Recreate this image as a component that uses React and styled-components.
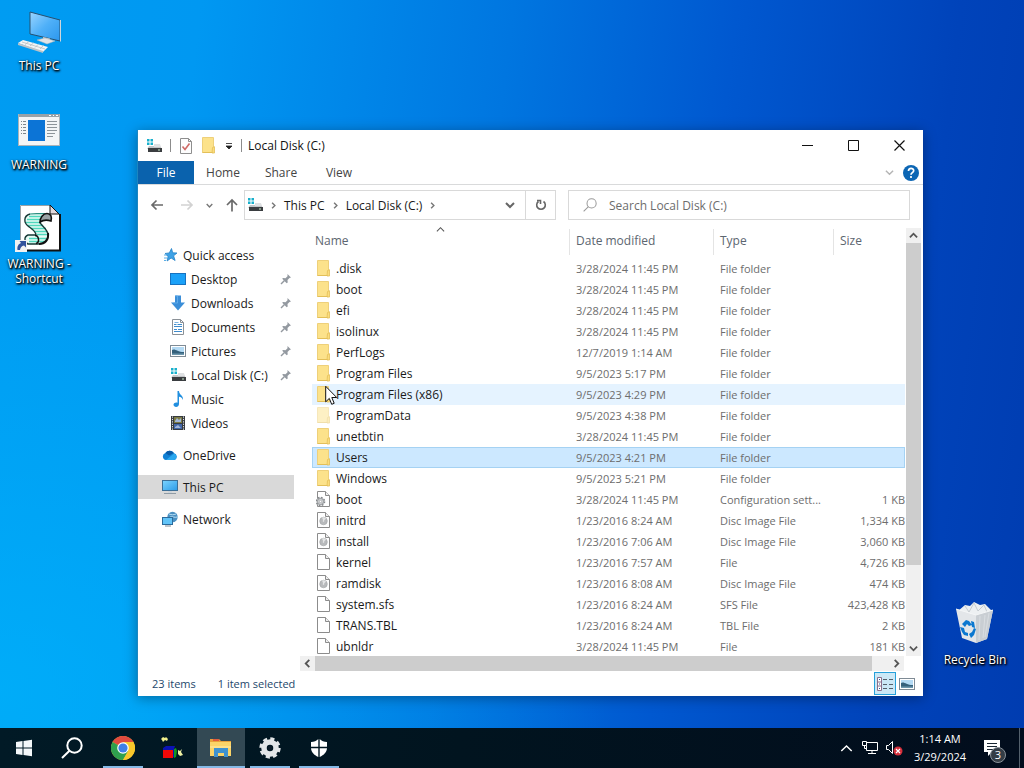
import React, { useState } from 'react'
import styled, { createGlobalStyle, css } from 'styled-components'

const GlobalStyle = createGlobalStyle`
  * {
    box-sizing: border-box;
  }

  body {
    margin: 0;
    font-family: 'Open Sans', 'Noto Sans', sans-serif;
    font-size: 12px;
    line-height: 15px;
    color: #1a1a1a;
    overflow: hidden;
  }

  button, input {
    font: inherit;
    color: inherit;
    background: none;
    border: 0;
    padding: 0;
    margin: 0;
  }

  a {
    color: inherit;
    text-decoration: none;
  }

  svg {
    display: block;
    flex: none;
  }
`

const Screen = styled.div`
  display: flex;
  flex-direction: column;
  height: 100vh;
  background:
    radial-gradient(ellipse 60% 60% at 0% 90%, rgba(0, 190, 255, .5), rgba(0, 190, 255, 0)),
    linear-gradient(97deg, #009cf2 0%, #0098f2 18%, #0076e0 46%, #0058d0 66%, #0043ba 86%, #003cb0 100%);
`

const Desktop = styled.main`
  position: relative;
  flex: 1;
  min-height: 0;
`

const Shortcut = styled.a`
  position: absolute;
  display: flex;
  flex-direction: column;
  align-items: center;
  gap: 4px;
  width: 76px;
  color: #fff;
  text-align: center;
  text-shadow: 1px 1px 2px #000, 1px 1px 2px #000, 0 1px 3px rgba(0, 0, 0, .8);
`

const PcShortcut = styled(Shortcut)`
  left: 1px;
  top: 10px;
`

const WarningShortcut = styled(Shortcut)`
  left: 1px;
  top: 109px;
`

const ScriptShortcut = styled(Shortcut)`
  left: 1px;
  top: 204px;
`

const BinShortcut = styled(Shortcut)`
  right: 11px;
  bottom: 61px;
`

const Window = styled.section`
  position: absolute;
  left: 137px;
  right: 101px;
  top: 130px;
  bottom: 32px;
  display: flex;
  flex-direction: column;
  background: #fff;
  border-left: 1px solid #1c86c0;
  box-shadow: 0 2px 12px rgba(0, 0, 0, .35);
`

const TitleBar = styled.header`
  display: flex;
  align-items: center;
  height: 31px;
  padding: 0 1px 0 8px;
`

const Rule = styled.span`
  width: 1px;
  height: 13px;
  background: #8c8c8c;
`

const QuickTools = styled.div`
  display: flex;
  align-items: center;
  gap: 8px;
  margin-right: 6px;
`

const WindowTitle = styled.h1`
  flex: 1;
  margin: 0;
  font-size: 12px;
  font-weight: 400;
  color: #111;
`

const CaptionButton = styled.button`
  display: flex;
  align-items: center;
  justify-content: center;
  width: 46px;
  height: 30px;
`

const Ribbon = styled.div`
  display: flex;
  height: 24px;
  border-bottom: 1px solid #d9dadb;
`

const RibbonTab = styled.button`
  width: ${p => p.$file ? 56 : 58}px;
  color: ${p => p.$file ? '#fff' : '#444'};
  background: ${p => p.$file ? '#0a62ad' : 'none'};
`

const RibbonEnd = styled.div`
  display: flex;
  align-items: center;
  gap: 9px;
  margin-left: auto;
  padding-right: 4px;
`

const AddressRow = styled.div`
  display: flex;
  align-items: center;
  height: 40px;
  padding: 0 13px 0 12px;
`

const NavButtons = styled.div`
  display: flex;
  align-items: center;
  gap: 12px;
  margin-right: 5px;

  button:first-child {
    margin-right: 4px;
  }
`

const AddressBox = styled.div`
  display: flex;
  flex: 1;
  align-items: center;
  height: 30px;
  border: 1px solid #d9d9d9;
`

const Crumbs = styled.nav`
  display: flex;
  flex: 1;
  align-items: center;
  gap: 7px;
  padding-left: 2px;
`

const BoxButton = styled.button`
  display: flex;
  align-items: center;
  justify-content: center;
  width: 30px;
  height: 28px;
  border-left: ${p => p.$divided ? '1px solid #d9d9d9' : '0'};
`

const SearchBox = styled.label`
  display: flex;
  align-items: center;
  gap: 12px;
  width: 342px;
  height: 30px;
  margin-left: 12px;
  padding-left: 14px;
  border: 1px solid #d9d9d9;

  input {
    flex: 1;
    min-width: 0;
    outline: 0;
  }

  input::placeholder {
    color: #6d6d6d;
    opacity: 1;
  }
`

const Body = styled.div`
  display: flex;
  flex: 1;
  min-height: 0;
`

const Sidebar = styled.nav`
  width: 156px;
  margin-right: 6px;
  padding-top: 18px;
`

const SideGroup = styled.div`
  margin-bottom: 8px;
`

const SideLink = styled.a`
  display: flex;
  align-items: center;
  gap: 5px;
  height: 24px;
  padding: 0 2px 0 ${p => p.$nested ? 32 : 24}px;
  background: ${p => p.$active ? '#d9d9d9' : 'none'};

  span {
    flex: 1;
    white-space: nowrap;
  }
`

const ListPane = styled.div`
  display: flex;
  flex: 1;
  flex-direction: column;
  min-width: 0;
  padding-right: 2px;
`

const ListArea = styled.div`
  display: flex;
  flex: 1;
  min-height: 0;
`

const TableClip = styled.div`
  flex: 1;
  min-width: 0;
  padding: 0 1px 0 12px;
  overflow: hidden;
`

const Table = styled.table`
  width: 100%;
  table-layout: fixed;
  border-collapse: collapse;

  th, td {
    padding: 0;
    text-align: left;
    font-weight: 400;
    white-space: nowrap;
  }
`

const Col = styled.col`
  width: ${p => p.$width ? p.$width + 'px' : 'auto'};
`

const HeadCell = styled.th`
  position: relative;
  height: 33px;
  color: #5c6670;

  span {
    display: block;
    height: 26px;
    padding-left: ${p => p.$first ? 3 : 6}px;
    line-height: 24px;
    border-left: ${p => p.$first ? '0' : '1px solid #e4e4e4'};
  }

  svg {
    position: absolute;
    top: 0;
    left: 50%;
    margin-left: -5px;
  }
`

const selectedRow = css`
  background: #cce8ff;
  box-shadow: inset 0 0 0 1px #a5d2f3;
`

const Row = styled.tr`
  height: 21px;
  ${p => p.$state === 'hover' && 'background: #e5f3ff;'}
  ${p => p.$state === 'selected' && selectedRow}
`

const FileName = styled.div`
  display: flex;
  align-items: center;
  gap: 4px;
  padding-left: 4px;
`

const InfoCell = styled.td`
  font-size: 11px;
  color: #6d6d6d;

  && {
    padding-left: ${p => p.$end ? 0 : 7}px;
    text-align: ${p => p.$end ? 'right' : 'left'};
  }
`

const VerticalBar = styled.div`
  display: flex;
  flex-direction: column;
  width: 15px;
  margin-top: 3px;
  background: #f0f0f0;
`

const HorizontalBar = styled.div`
  display: flex;
  height: 15px;
  margin-right: 17px;
  background: #f0f0f0;
`

const BarButton = styled.button`
  display: flex;
  align-items: center;
  justify-content: center;
  width: 15px;
  height: 15px;
  flex: none;
`

const Track = styled.div`
  display: flex;
  flex: 1;
  flex-direction: ${p => p.$vertical ? 'column' : 'row'};
`

const Thumb = styled.div`
  flex: 0 0 ${p => p.$size}%;
  background: #cdcdcd;
`

const StatusBar = styled.footer`
  display: flex;
  align-items: center;
  gap: 22px;
  height: 25px;
  padding: 0 9px 0 14px;
  font-size: 11px;
  color: #24476b;
`

const ViewButtons = styled.div`
  display: flex;
  align-items: center;
  gap: 4px;
  margin-left: auto;
`

const ViewButton = styled.button`
  display: flex;
  align-items: center;
  justify-content: center;
  width: ${p => p.$active ? 22 : 14}px;
  height: 23px;
  border: ${p => p.$active ? '1px solid #26a0da' : '0'};
  background: ${p => p.$active ? '#cbe8f6' : 'none'};
`

const Pointer = styled.div`
  position: absolute;
  left: 325px;
  top: 385px;
  pointer-events: none;
`

const Taskbar = styled.footer`
  display: flex;
  height: 40px;
  background: linear-gradient(90deg, #011a26, #01141f 45%, #020d1d);
  color: #fff;
`

const TaskGroup = styled.div`
  display: flex;
  gap: ${p => p.$apps ? 1 : 0}px;
  margin-left: ${p => p.$apps ? 3 : 0}px;
`

const TaskButton = styled.button`
  position: relative;
  display: flex;
  align-items: center;
  justify-content: center;
  width: 48px;
  height: 40px;
  background: ${p => p.$active ? '#334954' : 'none'};

  &::after {
    content: '';
    position: absolute;
    bottom: 0;
    left: ${p => p.$active ? 0 : 4}px;
    right: ${p => p.$active ? 0 : 4}px;
    height: 2px;
    background: ${p => p.$open ? '#85b9e6' : 'none'};
  }
`

const Tray = styled.div`
  display: flex;
  align-items: center;
  margin-left: auto;
`

const TrayButton = styled.button`
  display: flex;
  align-items: center;
  justify-content: center;
  width: 24px;
  height: 40px;
`

const Clock = styled.button`
  width: 68px;
  font-size: 11px;
  line-height: 18px;
  text-align: center;
`

const NoticeButton = styled(TrayButton)`
  position: relative;
  width: 45px;
  padding-right: 10px;
`

const NoticeCount = styled.span`
  position: absolute;
  left: 16px;
  top: 19px;
  width: 16px;
  height: 16px;
  border: 1px solid #8a929a;
  border-radius: 50%;
  background: #343d46;
  font-size: 11px;
  line-height: 14px;
`

const ShowDesktop = styled.button`
  width: 5px;
  border-left: 1px solid #54606c;
`

/* icons */

const Chevron = ({ dir = 'down', size = 9, color = '#555', stroke = 1.6 }) => {
  const points = {
    down: '1,3 5,7 9,3',
    up: '1,7 5,3 9,7',
    left: '7,1 3,5 7,9',
    right: '3,1 7,5 3,9'
  }
  return (
    <svg width={size} height={size} viewBox="0 0 10 10" fill="none" stroke={color} strokeWidth={stroke}>
      <polyline points={points[dir]} />
    </svg>
  )
}

const DriveIcon = () => (
  <svg width="16" height="16" viewBox="0 0 16 16">
    <path d="M1 1h2.500v2.500H1zM4.500 1H7v2.500H4.500zM1 4.500h2.500V7H1zM4.500 4.500H7V7H4.500z" fill="#18b0cc" />
    <path d="M3 8h11l2 3H1z" fill="#c3c6c9" />
    <path d="M8 6h6l1 3H8z" fill="#dfe1e3" />
    <rect x="2" y="10" width="14" height="4" fill="#3a3d40" />
    <rect x="12" y="11.500" width="2" height="1" fill="#c8ecc8" />
  </svg>
)

const FolderIcon = ({ faded }) => (
  <svg width="16" height="17" viewBox="0 0 16 17" opacity={faded ? 0.5 : 1}>
    <path d="M1.500.5h11v15h-11z" fill="#fce28b" stroke="#eed07a" />
    <path d="M11.500 10.500l2-.8v6.300h-2.500z" fill="#fbdc7c" stroke="#e3bf58" strokeWidth=".8" />
    <path d="M1.500 15.500h10" stroke="#e3bf58" />
  </svg>
)

const FileIcon = ({ kind }) => (
  <svg width="16" height="17" viewBox="0 0 16 17">
    <path d="M1.500.5h8l4 4v11h-12z" fill="#fff" stroke="#8c8c8c" />
    <path d="M9.500.5v4h4" fill="#eee" stroke="#8c8c8c" />
    {kind === 'disc' && (
      <g>
        <circle cx="7.500" cy="9" r="3.800" fill="#b8babc" stroke="#a2a4a6" strokeWidth=".6" />
        <path d="M7.500 9L10 6.500A4 4 0 0 0 6 5.500z" fill="#e4e5e6" />
        <circle cx="7.500" cy="9" r=".8" fill="#eee" />
      </g>
    )}
    {kind === 'config' && (
      <g>
        <circle cx="4.500" cy="10.500" r="4" fill="#c9cbcd" stroke="#86898c" strokeWidth="1.600" strokeDasharray="1.600 1.540" />
        <circle cx="4.500" cy="10.500" r="3" fill="#d4d6d8" stroke="#8d9093" strokeWidth=".8" />
        <circle cx="4.500" cy="10.500" r="1.200" fill="#fff" stroke="#8d9093" strokeWidth=".6" />
      </g>
    )}
  </svg>
)

const PinIcon = () => (
  <svg width="12" height="12" viewBox="0 0 12 12">
    <path d="M7.500 1l3.500 3.500-1.500.5-2 2 .2 2.500-1 .8L2.200 5.800 3 5l2.500.2 2-2z" fill="#9399a0" />
    <path d="M4.500 7.500L1 11" stroke="#9399a0" strokeWidth="1.400" />
  </svg>
)

const StarIcon = () => (
  <svg width="16" height="16" viewBox="0 0 16 16">
    <path d="M9.500 1.500l1.200 4.300 4.300.2-3.400 2.800 1.500 4.700-4-2.500-4 3 1-4.600L3 6.500l4.300-.6z" fill="#3ea2e6" stroke="#2382c8" strokeWidth=".8" />
    <path d="M2 8h3M2 11h3M2 13.500h2" stroke="#5aaee6" />
  </svg>
)

const MonitorIcon = ({ base }) => (
  <svg width="16" height="16" viewBox="0 0 16 16">
    <defs>
      <linearGradient id="screen" x2="1" y2="1">
        <stop stopColor="#7cd4ff" />
        <stop offset="1" stopColor="#2a9be8" />
      </linearGradient>
    </defs>
    {base
      ? (
        <g>
          <rect x=".5" y="1.500" width="15" height="10" fill="url(#screen)" stroke="#3b6f97" />
          <path d="M6 12h4v2H6z" fill="#cdd4da" />
          <path d="M2 14.500h12" stroke="#8f9ba5" />
        </g>
        )
      : <rect x=".5" y="2.500" width="15" height="11" fill="#1ba1f8" stroke="#1772c0" />}
  </svg>
)

const DownloadIcon = () => (
  <svg width="16" height="16" viewBox="0 0 16 16">
    <path d="M5 .5h6v7h4l-7 8-7-8h4z" fill="#3b8ed8" />
    <path d="M5.500 1h2v7h-4" fill="none" stroke="#5daaea" />
  </svg>
)

const DocumentIcon = () => (
  <svg width="16" height="16" viewBox="0 0 16 16">
    <path d="M2.500.5h8l3 3v12h-11z" fill="#fff" stroke="#8b9197" />
    <path d="M10.500.5v3h3" fill="none" stroke="#8b9197" />
    <path d="M4 5.500h2.500M7.500 5.500H12M4 7.500h8M4 10.500h3M8 10.500h4M4 12.500h8" stroke="#3f8ccd" />
    <path d="M4.500 3.500h4" stroke="#79b3e2" />
  </svg>
)

const PictureIcon = () => (
  <svg width="16" height="16" viewBox="0 0 16 16">
    <rect x=".5" y="2.500" width="15" height="11" fill="#fff" stroke="#7f8b95" />
    <rect x="2" y="4" width="12" height="8" fill="#b4daf4" />
    <path d="M2 7c3-2 5 2 12 2v3H2z" fill="#35617c" />
    <path d="M2 10.500h12V12H2z" fill="#6e98ae" />
  </svg>
)

const MusicIcon = () => (
  <svg width="16" height="16" viewBox="0 0 16 16">
    <path d="M7.500 0h1.500c0 4 4.500 4 4 9-.6-2-2-3-4-3.200V13c0 4-6 3.500-5.500.5.3-1.700 2.300-2.400 4-1.800z" fill="#218fdf" />
  </svg>
)

const VideoIcon = () => (
  <svg width="16" height="16" viewBox="0 0 16 16">
    <rect x="1" y="1" width="14" height="14" fill="#363a3f" />
    <rect x="4" y="2" width="8" height="6" fill="#7c7b45" />
    <rect x="4" y="9" width="8" height="5" fill="#4266a8" />
    <path d="M2.500 1.500v14M13.500 1.500v14" stroke="#e6e8ea" strokeDasharray="1.200 1.200" />
    <path d="M5 6l2-3 2 2 2-2v4H5zM5 12l3-2 3 3H5z" fill="#a3b6d8" />
  </svg>
)

const CloudIcon = () => (
  <svg width="16" height="16" viewBox="0 0 16 16">
    <path d="M4 13a3.600 3.600 0 0 1-.6-7A5 5 0 0 1 12 6.300 3.500 3.500 0 0 1 12.500 13z" fill="#1080d4" />
    <path d="M3.500 6a5 5 0 0 1 8.300 0L7 8.500z" fill="#0a5ba8" />
    <path d="M4 13l8-6.500a3.500 3.500 0 0 1 .5 6.500z" fill="#2aa7ee" />
  </svg>
)

const NetworkIcon = () => (
  <svg width="16" height="16" viewBox="0 0 16 16">
    <circle cx="10.500" cy="6" r="5.200" fill="#4a90c2" />
    <path d="M7 3c3 1 4 1 7 0M8 6c3-1 4 1 7.500 0" stroke="#b8dff5" fill="none" />
    <rect x=".5" y="6.500" width="10" height="7" fill="#62c4f8" stroke="#2b6b9c" />
    <path d="M3 15h6" stroke="#7e8b96" />
  </svg>
)

const CheckPageIcon = () => (
  <svg width="14" height="16" viewBox="0 0 14 16">
    <path d="M1.500.5h8l3 3v12h-11z" fill="#fdfdfd" stroke="#8e8e8e" />
    <path d="M9.500.5v3h3" fill="none" stroke="#8e8e8e" />
    <path d="M3.500 8.500l2.500 3 4.500-6" fill="none" stroke="#cf6a66" strokeWidth="1.600" />
  </svg>
)

const ArrowIcon = ({ dir, color = '#6a6a6a' }) => (
  <svg width="14" height="14" viewBox="0 0 14 14" fill="none" stroke={color} strokeWidth="1.700">
    {dir === 'left' && <path d="M13 7H2M6.500 2.500L2 7l4.500 4.500" />}
    {dir === 'right' && <path d="M1 7h11M7.500 2.500L12 7l-4.500 4.500" />}
    {dir === 'up' && <path d="M7 13.500V2M2 7l5-5 5 5" />}
  </svg>
)

const BigPcIcon = () => (
  <svg width="48" height="44" viewBox="0 0 48 44">
    <defs>
      <linearGradient id="bigScreen" x2="1" y2="1">
        <stop stopColor="#9bd5ff" />
        <stop offset=".5" stopColor="#4fb0f8" />
        <stop offset="1" stopColor="#2b97ee" />
      </linearGradient>
    </defs>
    <path d="M15 2l30 8v21l-30-7z" fill="url(#bigScreen)" stroke="#27506f" />
    <path d="M45.500 10v21.500" stroke="#cfd6dc" />
    <path d="M28 27l7 1.500v3l-7-1z" fill="#c3c9ce" />
    <path d="M22 30l8-2 10 3-8 3z" fill="#e2e5e8" stroke="#aab2b8" strokeWidth=".5" />
    <path d="M3 33l5-3 25 7-5 5z" fill="#f3f4f5" />
    <path d="M3 33l25 8v2L3 35z" fill="#bcc2c7" />
    <path d="M7 32l23 7M10 34.500l4-3M15 36l4-3.500M20 37.500l4-4M25 39l4-4" stroke="#b0b7bc" strokeWidth=".7" />
  </svg>
)

const AppWindowIcon = () => (
  <svg width="42" height="44" viewBox="0 0 42 44">
    <rect x=".5" y="5.500" width="41" height="31" fill="#f3f5f6" stroke="#aab3b9" />
    <path d="M1 5h40v3H1z" fill="#98a2a8" />
    <path d="M31 6.500h2M35 6.500h1M38 6.500h2" stroke="#fff" />
    <rect x="10" y="11" width="17" height="21" fill="#0c74d6" />
    <path d="M3 12.500h5M3 15.500h5M3 18.500h5M3 21.500h5M3 24.500h5" stroke="#7d868c" strokeDasharray="1 1 3 0" />
    <path d="M29 12.500h10M29 15.500h10M29 18.500h10M29 21.500h10M29 24.500h8M29 27.500h6" stroke="#8d9499" />
  </svg>
)

const ScriptIcon = () => (
  <svg width="48" height="48" viewBox="0 0 48 48">
    <path d="M5 1h30l9 9v37H5z" fill="#fff" />
    <path d="M5.500 47V1.500H35" fill="none" stroke="#9aa2a6" />
    <path d="M35 1v9h9z" fill="#e2d9dc" stroke="#111" />
    <path d="M45 10v36.500H8" fill="none" stroke="#111" strokeWidth="2" />
    <path d="M15 10c5-1 11 0 18-.5l-4 7.500h-4c1 4 8 8 8 14-1 6-5 9-10 9H13c-3-2-4-7 0-9h8c0-4-10-7-11-14 0-4 2-6 5-7z" fill="#e8fbf5" />
    <path d="M14 12.500h14M12 15.500h14M11 18.500h15M13 21.500h15M16 24.500h15M20 27.500h12M22 30.500h11M14 34.500h17M14 37.500h16" stroke="#4fd8bd" strokeWidth="1.500" />
    <path d="M15 10c5-1 11 0 18-.5" fill="none" stroke="#2b8f80" strokeWidth="1.200" />
    <path d="M15 10c-7 2-6 9-2 12 4 3 8 5 8 9h-8c-5 2-3 8 0 9h10c6 0 10-4 10-9 0-6-8-10-8-13" fill="none" stroke="#163a36" strokeWidth="1.400" />
    <path d="M25 18c0-4 3-8.500 7-8.500s5 3 4 7.500c-3-1-8-1-11 1z" fill="#9aa2a4" stroke="#111" strokeWidth="1.600" />
    <path d="M20 31.500c4 0 5 7 1 8" fill="none" stroke="#111" strokeWidth="1.500" />
    <path d="M24 40c6 0 10-4 9-11" fill="none" stroke="#111" strokeWidth="2" />
    <rect x="0" y="36" width="12" height="12" fill="#f2f2f2" />
    <path d="M2.500 46c-.5-4 1-6 3.500-7L4.500 37H11v6.500L9 41.500c-2.500.5-3.500 2-4 4.500z" fill="#31529c" />
  </svg>
)

const BinIcon = () => (
  <svg width="44" height="48" viewBox="0 0 44 48">
    <path d="M5 11l7-6 5 1 4-4 6 3 5-1 7 7-4 7H9z" fill="#edf0f2" />
    <path d="M12 6l4 6 5-9 4 8 6-6 3 7" fill="none" stroke="#c5cbd0" />
    <path d="M3 9l6 29 14 5 11-4 6-29-17 5z" fill="#e3e6e9" />
    <path d="M23 15l17-5-6 29-11 4z" fill="#c9ced3" />
    <path d="M3 9l20 6 17-5" fill="none" stroke="#f4f6f7" />
    <path d="M27 16l-1 24M32 15l-2 23M36 13l-4 24" stroke="#dde1e4" strokeWidth=".8" />
    <path d="M9 24l4-4 3 1 3 4-3 1-2-2-2 3zM18 21l3 1 1 6-3-1zM7 27l4 1 1 4 3 1v3l-4-1-2-3zM16 34l3-2 2-4 2 1-2 6-3 3z" fill="#0b78d0" />
  </svg>
)

const WindowsIcon = () => (
  <svg width="18" height="18" viewBox="0 0 18 18" fill="#f4f8fa">
    <path d="M1 3l6.500-1v6.500H1zM8.500 1.900L17 .7v7.800H8.500zM1 9.500h6.500V16L1 15zM8.500 9.500H17v7.800l-8.500-1.200z" />
  </svg>
)

const SearchIcon = ({ size, color, stroke }) => (
  <svg width={size} height={size} viewBox="0 0 22 22" fill="none" stroke={color} strokeWidth={stroke}>
    <circle cx="13.500" cy="8.500" r="7.200" />
    <path d="M8.500 13.700L1 21" />
  </svg>
)

const ChromeIcon = () => (
  <svg width="24" height="24" viewBox="0 0 24 24">
    <circle cx="12" cy="12" r="12" fill="#f9c72b" />
    <path d="M12 12L1.600 6A12 12 0 0 1 22.400 6z" fill="#e04a3f" />
    <path d="M1.600 6A12 12 0 0 0 12 24l5.200-9L12 12z" fill="#2fa04e" />
    <path d="M12 6h10.400L12 0z" fill="#e04a3f" />
    <path d="M17.200 15L12 24A12 12 0 0 0 22.400 6H12z" fill="#f9c72b" />
    <circle cx="12" cy="12" r="5.800" fill="#fff" />
    <circle cx="12" cy="12" r="4.600" fill="#3f7fe8" />
  </svg>
)

const BoxAppIcon = () => (
  <svg width="24" height="24" viewBox="0 0 24 24">
    <path d="M1 3l2-2 2 1 1-1 2 2-1 2-2-1-2 2-1-2z" fill="#f2f08c" />
    <path d="M3 12l3-2h9l-1 3v8l-2 1H3z" fill="#0b13b4" />
    <rect x="3" y="14" width="10" height="8" fill="#f20808" />
    <path d="M14 13l2-1 1 3-1 6-2 1z" fill="#12981e" />
    <path d="M18 14l2 1 2-2-1 3 2 3-3 1-2-2z" fill="#f0f2a4" />
  </svg>
)

const ExplorerIcon = () => (
  <svg width="24" height="22" viewBox="0 0 24 22">
    <path d="M1 2h9l2 2h10v5H1z" fill="#e9a13a" />
    <path d="M4 2h6v2H4z" fill="#e25c3f" />
    <path d="M1 5h21v14H1z" fill="#fbd468" />
    <path d="M5 11h14v9h-4v-4H9v4H5z" fill="#3f92cf" />
    <path d="M1 9h21v2H1z" fill="#fde08a" />
  </svg>
)

const GearIcon = () => (
  <svg width="22" height="22" viewBox="0 0 22 22">
    <circle cx="11" cy="11" r="9" fill="none" stroke="#e3e6e8" strokeWidth="3.400" strokeDasharray="4 3.070" />
    <circle cx="11" cy="11" r="6" fill="none" stroke="#e3e6e8" strokeWidth="5.500" />
    <circle cx="11" cy="11" r="2.200" fill="#0b1c28" />
  </svg>
)

const ShieldIcon = () => (
  <svg width="18" height="20" viewBox="0 0 18 20" fill="#fff">
    <path d="M8.300 1v7.800H1V4c3 0 5.500-1 7.300-3zM9.700 1c1.800 2 4.300 3 7.300 3v4.800H9.700zM1 10.200h7.300V19C4 17 1.300 14 1 10.200zM9.700 10.200H17c-.3 3.800-3 6.800-7.300 8.800z" />
  </svg>
)

const NetTrayIcon = () => (
  <svg width="18" height="16" viewBox="0 0 18 16" fill="none" stroke="#fff">
    <path d="M5.500 2.500h11v8h-11v-5M7 13.500h8M11 10.500v3" />
    <path d="M1.500 1.500h4v4h-4zM3.500 5.500v3h2" />
  </svg>
)

const VolumeIcon = () => (
  <svg width="18" height="16" viewBox="0 0 18 16">
    <path d="M1.500 5.500h2l4-4v12l-4-4h-2z" fill="none" stroke="#fff" />
    <circle cx="13" cy="11" r="4.500" fill="#d6303c" />
    <path d="M11 9l4 4M15 9l-4 4" stroke="#fff" strokeWidth="1.200" />
  </svg>
)

const NoticeIcon = () => (
  <svg width="18" height="18" viewBox="0 0 18 18">
    <path d="M1 1h16v12H9l-4 4v-4H1z" fill="#fff" />
    <path d="M4 4.500h10M4 7.500h10M4 10.500h6" stroke="#1a2733" />
  </svg>
)

const DetailsIcon = () => (
  <svg width="18" height="14" viewBox="0 0 18 14">
    <path d="M1.500.5h4v13h-4zM1.500 5h4M1.500 9h4" fill="#fff" stroke="#8a6f8c" />
    <path d="M7 2.500h4M13 2.500h4M7 7.500h4M13 7.500h4M7 11.500h4M13 11.500h4" stroke="#55606a" />
    <path d="M3 2.500h1M3 7h1M3 11.500h1" stroke="#2b5c99" />
  </svg>
)

const PointerIcon = () => (
  <svg width="13" height="21" viewBox="0 0 13 21">
    <path d="M.7 1.300v15.500l3.600-3.400 2.400 5.900 2.500-1-2.400-5.800h4.900z" fill="#fff" stroke="#111" />
  </svg>
)

const quickAccess = [
  { name: 'Desktop', Icon: MonitorIcon, pinned: true },
  { name: 'Downloads', Icon: DownloadIcon, pinned: true },
  { name: 'Documents', Icon: DocumentIcon, pinned: true },
  { name: 'Pictures', Icon: PictureIcon, pinned: true },
  { name: 'Local Disk (C:)', Icon: DriveIcon, pinned: true },
  { name: 'Music', Icon: MusicIcon },
  { name: 'Videos', Icon: VideoIcon }
]

const files = [
  ['.disk', '3/28/2024 11:45 PM', 'File folder', '', 'folder'],
  ['boot', '3/28/2024 11:45 PM', 'File folder', '', 'folder'],
  ['efi', '3/28/2024 11:45 PM', 'File folder', '', 'folder'],
  ['isolinux', '3/28/2024 11:45 PM', 'File folder', '', 'folder'],
  ['PerfLogs', '12/7/2019 1:14 AM', 'File folder', '', 'folder'],
  ['Program Files', '9/5/2023 5:17 PM', 'File folder', '', 'folder'],
  ['Program Files (x86)', '9/5/2023 4:29 PM', 'File folder', '', 'folder'],
  ['ProgramData', '9/5/2023 4:38 PM', 'File folder', '', 'hidden'],
  ['unetbtin', '3/28/2024 11:45 PM', 'File folder', '', 'folder'],
  ['Users', '9/5/2023 4:21 PM', 'File folder', '', 'folder'],
  ['Windows', '9/5/2023 5:21 PM', 'File folder', '', 'folder'],
  ['boot', '3/28/2024 11:45 PM', 'Configuration sett...', '1 KB', 'config'],
  ['initrd', '1/23/2016 8:24 AM', 'Disc Image File', '1,334 KB', 'disc'],
  ['install', '1/23/2016 7:06 AM', 'Disc Image File', '3,060 KB', 'disc'],
  ['kernel', '1/23/2016 7:57 AM', 'File', '4,726 KB', 'file'],
  ['ramdisk', '1/23/2016 8:08 AM', 'Disc Image File', '474 KB', 'disc'],
  ['system.sfs', '1/23/2016 8:24 AM', 'SFS File', '423,428 KB', 'file'],
  ['TRANS.TBL', '1/23/2016 8:24 AM', 'TBL File', '2 KB', 'file'],
  ['ubnldr', '3/28/2024 11:45 PM', 'File', '181 KB', 'file']
]

function RowIcon ({ kind }) {
  if (kind === 'folder' || kind === 'hidden') return <FolderIcon faded={kind === 'hidden'} />
  return <FileIcon kind={kind} />
}

function FileTable () {
  const [selected, setSelected] = useState(9)
  const [hovered, setHovered] = useState(6)

  function rowState (i) {
    if (i === selected) return 'selected'
    return i === hovered ? 'hover' : null
  }

  return (
    <Table>
      <colgroup>
        <Col />
        <Col $width={144} />
        <Col $width={120} />
        <Col $width={72} />
      </colgroup>
      <thead>
        <tr>
          <HeadCell $first><Chevron dir="up" stroke={1.2} /><span>Name</span></HeadCell>
          <HeadCell><span>Date modified</span></HeadCell>
          <HeadCell><span>Type</span></HeadCell>
          <HeadCell><span>Size</span></HeadCell>
        </tr>
      </thead>
      <tbody>
        {files.map(([name, date, type, size, kind], i) => (
          <Row
            key={i}
            $state={rowState(i)}
            onClick={() => setSelected(i)}
            onMouseEnter={() => setHovered(i)}
          >
            <td><FileName><RowIcon kind={kind} />{name}</FileName></td>
            <InfoCell>{date}</InfoCell>
            <InfoCell>{type}</InfoCell>
            <InfoCell $end>{size}</InfoCell>
          </Row>
        ))}
      </tbody>
    </Table>
  )
}

function Explorer () {
  const [query, setQuery] = useState('')

  return (
    <Window>
      <TitleBar>
        <QuickTools>
          <DriveIcon />
          <Rule />
          <CheckPageIcon />
          <FolderIcon />
          <svg width="8" height="8" viewBox="0 0 8 8"><path d="M1 1.500h6M1 4h6L4 7z" fill="#222" stroke="#222" strokeWidth=".8" /></svg>
          <Rule />
        </QuickTools>
        <WindowTitle>Local Disk (C:)</WindowTitle>
        <CaptionButton aria-label="Minimize">
          <svg width="11" height="11" viewBox="0 0 11 11"><path d="M0 5.500h11" stroke="#111" /></svg>
        </CaptionButton>
        <CaptionButton aria-label="Maximize">
          <svg width="11" height="11" viewBox="0 0 11 11"><path d="M.5.5h10v10H.5z" stroke="#111" fill="none" /></svg>
        </CaptionButton>
        <CaptionButton aria-label="Close">
          <svg width="11" height="11" viewBox="0 0 11 11"><path d="M.5.5l10 10M10.500.5l-10 10" stroke="#111" strokeWidth="1.200" /></svg>
        </CaptionButton>
      </TitleBar>

      <Ribbon>
        <RibbonTab $file>File</RibbonTab>
        <RibbonTab>Home</RibbonTab>
        <RibbonTab>Share</RibbonTab>
        <RibbonTab>View</RibbonTab>
        <RibbonEnd>
          <Chevron color="#b5b5b5" />
          <svg width="16" height="16" viewBox="0 0 16 16">
            <circle cx="8" cy="8" r="8" fill="#0c66b4" />
            <path d="M5.500 6c0-3.500 5.200-3.300 5.200-.3C10.700 7.700 8 7.600 8 9.800M8 11v2" stroke="#fff" strokeWidth="1.700" fill="none" />
          </svg>
        </RibbonEnd>
      </Ribbon>

      <AddressRow>
        <NavButtons>
          <button aria-label="Back"><ArrowIcon dir="left" /></button>
          <button aria-label="Forward"><ArrowIcon dir="right" color="#d2d2d2" /></button>
          <button aria-label="Recent locations"><Chevron size={7} color="#777" stroke={2} /></button>
          <button aria-label="Up"><ArrowIcon dir="up" /></button>
        </NavButtons>
        <AddressBox>
          <Crumbs>
            <DriveIcon />
            <Chevron dir="right" size={7} stroke={2} color="#777" />
            <a href="#pc">This PC</a>
            <Chevron dir="right" size={7} stroke={2} color="#777" />
            <a href="#disk">Local Disk (C:)</a>
            <Chevron dir="right" size={7} stroke={2} color="#777" />
          </Crumbs>
          <BoxButton aria-label="Previous locations"><Chevron size={10} stroke={2} color="#666" /></BoxButton>
          <BoxButton $divided aria-label="Refresh">
            <svg width="12" height="12" viewBox="0 0 12 12" fill="none" stroke="#666" strokeWidth="1.600">
              <path d="M8.500 2.500a4.300 4.300 0 1 1-5 0M2 1.500h3.500V5" />
            </svg>
          </BoxButton>
        </AddressBox>
        <SearchBox>
          <SearchIcon size={14} color="#999" stroke={1.600} />
          <input
            aria-label="Search Local Disk (C:)"
            placeholder="Search Local Disk (C:)"
            value={query}
            onChange={ev => setQuery(ev.target.value)}
          />
        </SearchBox>
      </AddressRow>

      <Body>
        <Sidebar>
          <SideGroup>
            <SideLink href="#quick"><StarIcon /><span>Quick access</span></SideLink>
            {quickAccess.map(({ name, Icon, pinned }) => (
              <SideLink key={name} href="#quick" $nested>
                <Icon />
                <span>{name}</span>
                {pinned && <PinIcon />}
              </SideLink>
            ))}
          </SideGroup>
          <SideGroup>
            <SideLink href="#onedrive"><CloudIcon /><span>OneDrive</span></SideLink>
          </SideGroup>
          <SideGroup>
            <SideLink href="#pc" $active><MonitorIcon base /><span>This PC</span></SideLink>
          </SideGroup>
          <SideGroup>
            <SideLink href="#network"><NetworkIcon /><span>Network</span></SideLink>
          </SideGroup>
        </Sidebar>

        <ListPane>
          <ListArea>
            <TableClip><FileTable /></TableClip>
            <VerticalBar>
              <BarButton aria-label="Scroll up"><Chevron dir="up" stroke={2} /></BarButton>
              <Track $vertical><Thumb $size={81} /></Track>
              <BarButton aria-label="Scroll down"><Chevron stroke={2} /></BarButton>
            </VerticalBar>
          </ListArea>
          <HorizontalBar>
            <BarButton aria-label="Scroll left"><Chevron dir="left" stroke={2} /></BarButton>
            <Track><Thumb $size={97} /></Track>
            <BarButton aria-label="Scroll right"><Chevron dir="right" stroke={2} /></BarButton>
          </HorizontalBar>
        </ListPane>
      </Body>

      <StatusBar>
        <span>23 items</span>
        <span>1 item selected</span>
        <ViewButtons>
          <ViewButton $active aria-label="Details"><DetailsIcon /></ViewButton>
          <ViewButton aria-label="Large icons"><PictureIcon /></ViewButton>
        </ViewButtons>
      </StatusBar>
    </Window>
  )
}

export default function App () {
  return (
    <Screen>
      <GlobalStyle />
      <Desktop>
        <PcShortcut href="#pc"><BigPcIcon />This PC</PcShortcut>
        <WarningShortcut href="#warning"><AppWindowIcon />WARNING</WarningShortcut>
        <ScriptShortcut href="#shortcut"><ScriptIcon />WARNING - Shortcut</ScriptShortcut>
        <BinShortcut href="#bin"><BinIcon />Recycle Bin</BinShortcut>
        <Explorer />
        <Pointer><PointerIcon /></Pointer>
      </Desktop>

      <Taskbar>
        <TaskGroup>
          <TaskButton aria-label="Start"><WindowsIcon /></TaskButton>
          <TaskButton aria-label="Search"><SearchIcon size={22} color="#fff" stroke={2} /></TaskButton>
        </TaskGroup>
        <TaskGroup $apps>
          <TaskButton $open aria-label="Chrome"><ChromeIcon /></TaskButton>
          <TaskButton aria-label="Box"><BoxAppIcon /></TaskButton>
          <TaskButton $open $active aria-label="File Explorer"><ExplorerIcon /></TaskButton>
          <TaskButton $open aria-label="Settings"><GearIcon /></TaskButton>
          <TaskButton $open aria-label="Security"><ShieldIcon /></TaskButton>
        </TaskGroup>
        <Tray>
          <TrayButton aria-label="Hidden icons"><Chevron dir="up" size={13} color="#fff" stroke={1.100} /></TrayButton>
          <TrayButton aria-label="Network"><NetTrayIcon /></TrayButton>
          <TrayButton aria-label="Volume"><VolumeIcon /></TrayButton>
          <Clock>1:14 AM<br />3/29/2024</Clock>
          <NoticeButton aria-label="Notifications">
            <NoticeIcon />
            <NoticeCount>3</NoticeCount>
          </NoticeButton>
        </Tray>
        <ShowDesktop aria-label="Show desktop" />
      </Taskbar>
    </Screen>
  )
}
